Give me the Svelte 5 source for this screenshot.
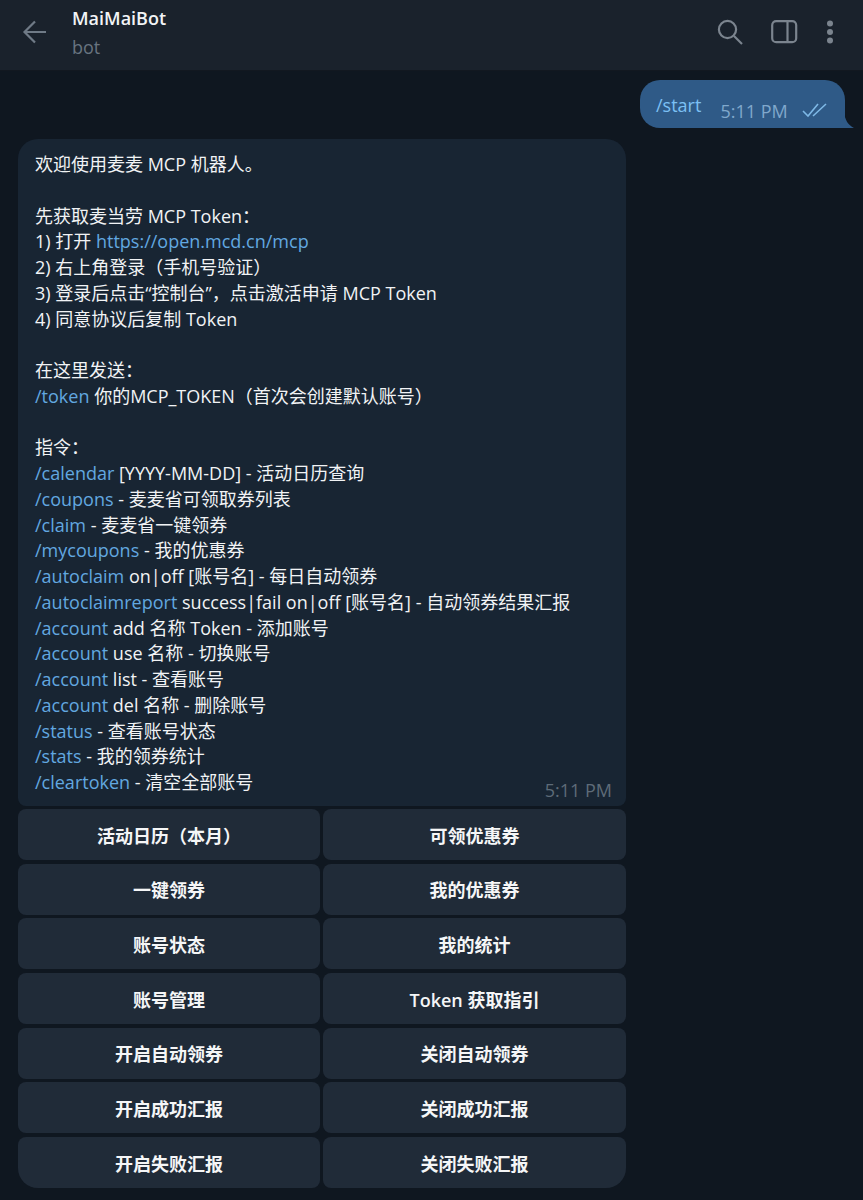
<script>
  const L = (href, rest) => ({ href, rest });
  const lines = [
    L('', '欢迎使用麦麦 MCP 机器人。'),
    L('', ''),
    L('', '先获取麦当劳 MCP Token：'),
    { pre: '1) 打开 ', href: 'https://open.mcd.cn/mcp', rest: '' },
    L('', '2) 右上角登录（手机号验证）'),
    L('', '3) 登录后点击“控制台”，点击激活申请 MCP Token'),
    L('', '4) 同意协议后复制 Token'),
    L('', ''),
    L('', '在这里发送：'),
    L('/token', ' 你的MCP_TOKEN（首次会创建默认账号）'),
    L('', ''),
    L('', '指令：'),
    L('/calendar', ' [YYYY-MM-DD] - 活动日历查询'),
    L('/coupons', ' - 麦麦省可领取券列表'),
    L('/claim', ' - 麦麦省一键领券'),
    L('/mycoupons', ' - 我的优惠券'),
    L('/autoclaim', ' on|off [账号名] - 每日自动领券'),
    L('/autoclaimreport', ' success|fail on|off [账号名] - 自动领券结果汇报'),
    L('/account', ' add 名称 Token - 添加账号'),
    L('/account', ' use 名称 - 切换账号'),
    L('/account', ' list - 查看账号'),
    L('/account', ' del 名称 - 删除账号'),
    L('/status', ' - 查看账号状态'),
    L('/stats', ' - 我的领券统计'),
    L('/cleartoken', ' - 清空全部账号')
  ];
  const buttons = [
    '活动日历（本月）', '可领优惠券', '一键领券', '我的优惠券', '账号状态', '我的统计',
    '账号管理', 'Token 获取指引', '开启自动领券', '关闭自动领券', '开启成功汇报', '关闭成功汇报',
    '开启失败汇报', '关闭失败汇报'
  ];
</script>

<div class="page">
  <header class="topbar">
    <svg class="back" width="28" height="26" viewBox="0 0 28 26" fill="none" stroke="#6f7a86" stroke-width="2.2">
      <path d="M24 13H3M13 2.5 2.5 13 13 23.5" />
    </svg>
    <div class="peer">
      <div class="name">MaiMaiBot</div>
      <div class="status">bot</div>
    </div>
    <div class="actions">
      <svg width="26" height="26" viewBox="0 0 26 26" fill="none" stroke="#7b848e" stroke-width="2.2">
        <circle cx="10.5" cy="10.5" r="8.6" /><path d="M17 17l8 8" />
      </svg>
      <svg width="27" height="24" viewBox="0 0 27 24" fill="none" stroke="#7b848e" stroke-width="2.2">
        <rect x="1.2" y="1.2" width="24" height="21" rx="4" /><path d="M16.5 1.5v21" />
      </svg>
      <svg width="8" height="24" viewBox="0 0 8 24" fill="#7b848e">
        <circle cx="4" cy="3.5" r="3" /><circle cx="4" cy="12" r="3" /><circle cx="4" cy="20.5" r="3" />
      </svg>
    </div>
  </header>

  <main class="chat">
    <div class="out">
      <span class="cmd">/start</span>
      <span class="out-time">5:11 PM</span>
      <svg class="ticks" width="26" height="15" viewBox="0 0 26 15" fill="none" stroke="#7eb8e6" stroke-width="1.6">
        <path d="M1 8l5 5L16 1M11 13 24 1" />
      </svg>
      <svg class="tail" width="10" height="16" viewBox="0 0 10 16" fill="#2f5a87">
        <path d="M0 0C1 8 4 13 10 16H0Z" />
      </svg>
    </div>

    <div class="incoming">
      <div class="bubble">
        {#each lines as line}
          <div class="line">{#if line.pre}{line.pre}{/if}{#if line.href}<span class="link">{line.href}</span>{/if}{line.rest}</div>
        {/each}
        <span class="time">5:11 PM</span>
      </div>
      <div class="keyboard">
        {#each buttons as label}
          <div class="key">{label}</div>
        {/each}
      </div>
    </div>
  </main>
</div>

<style>
  :global(body) {
    margin: 0;
    background: #0e1621;
  }
  .page {
    width: 863px;
    height: 1200px;
    overflow: hidden;
    background: #0f1720;
    font-family: "Open Sans", "Noto Sans CJK SC", sans-serif;
    color: #f1f3f5;
  }
  .topbar {
    height: 71px;
    box-sizing: border-box;
    display: flex;
    align-items: center;
    padding: 0 29px 7px 22px;
    background: #1a222c;
    border-bottom: 1px solid #121820;
  }
  .back {
    flex: none;
  }
  .peer {
    margin-left: 22px;
    flex: 1;
    padding-top: 3px;
  }
  .name {
    font-size: 18px;
    font-weight: 600;
    line-height: 28px;
    color: #f2f4f6;
  }
  .status {
    font-size: 18px;
    line-height: 30px;
    color: #687480;
  }
  .actions {
    display: flex;
    align-items: center;
    gap: 28px;
  }
  .chat {
    padding: 9px 0 0 18px;
    display: flex;
    flex-direction: column;
  }
  .out {
    position: relative;
    align-self: flex-end;
    margin-right: 18px;
    width: 205px;
    height: 48px;
    box-sizing: border-box;
    padding: 12px 0 0 16px;
    border-radius: 20px 20px 0 20px;
    background: #2f5a87;
    display: flex;
    align-items: flex-start;
  }
  .cmd {
    font-size: 18px;
    line-height: 26px;
    color: #7cc0f4;
  }
  .out-time {
    margin-left: 19px;
    margin-top: 6px;
    font-size: 18px;
    line-height: 26px;
    color: #80a8cc;
  }
  .ticks {
    margin: 11px 0 0 14px;
  }
  .tail {
    position: absolute;
    right: -9px;
    bottom: 0;
  }
  .incoming {
    width: 608px;
    margin-top: 11px;
  }
  .bubble {
    position: relative;
    height: 667px;
    box-sizing: border-box;
    padding: 13px 16px 0 17px;
    background: #182533;
    border-radius: 20px 20px 8px 8px;
    font-size: 18px;
    line-height: 25.75px;
  }
  .line {
    min-height: 25.75px;
    white-space: pre;
  }
  .link {
    color: #62a8e0;
  }
  .time {
    position: absolute;
    right: 14px;
    bottom: 3px;
    font-size: 18px;
    line-height: 26px;
    color: #5e6b78;
  }
  .keyboard {
    margin-top: 3px;
    display: grid;
    grid-template-columns: 302px 303px;
    column-gap: 3px;
    grid-auto-rows: 51px;
    row-gap: 3.7px;
  }
  .key {
    display: flex;
    align-items: center;
    justify-content: center;
    background: #202b38;
    border-radius: 8px;
    font-size: 18px;
    font-weight: 600;
    color: #f5f6f7;
  }
  .key:nth-last-child(2) {
    border-bottom-left-radius: 20px;
  }
  .key:last-child {
    border-bottom-right-radius: 20px;
  }
</style>
